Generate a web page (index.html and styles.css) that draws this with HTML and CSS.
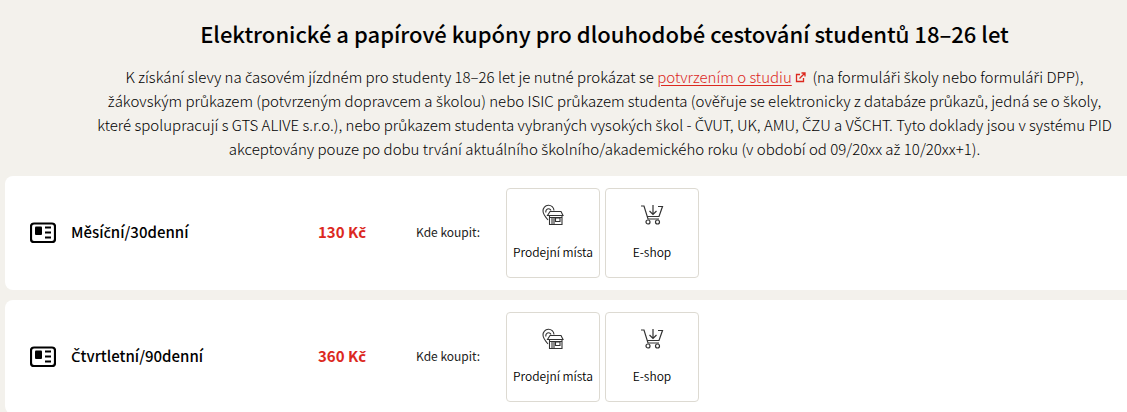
FILE: index.html
```html
<!DOCTYPE html>
<html lang="cs">
<head>
<meta charset="utf-8">
<title>Kupóny pro studenty</title>
<link rel="stylesheet" href="styles.css">
</head>
<body>
<svg class="sprite" aria-hidden="true">
  <symbol id="card" viewBox="0 0 26 22">
    <rect x="1" y="1.500" width="24" height="18.500" rx="3" fill="none" stroke="#000" stroke-width="2.200"/>
    <rect x="5" y="4.500" width="7" height="8.500" rx="1"/>
    <path d="M15 5.500h6M15 10.500h6M15 15.500h6" fill="none" stroke="#000" stroke-width="2"/>
  </symbol>
  <symbol id="store" viewBox="0 0 22 22">
    <g fill="none" stroke="#333" stroke-width="1.1">
      <path d="M6 16C3 12.500 1 10 1 7a5.500 5.500 0 0 1 11-.500"/>
      <path d="M4 8.500A2.600 2.600 0 1 1 9 6.500"/>
      <path d="M8 7.500h11l2 4H5.500z"/>
      <path d="M7.500 12v8.500h12.500V12M7.500 13.500H20M10 14v6M12 14v6M13.500 14h4.500v3.500h-4.500z"/>
    </g>
  </symbol>
  <symbol id="cart" viewBox="0 0 24 22">
    <g fill="none" stroke="#333" stroke-width="1.200">
      <path d="M1 2h3l4 13h11M18 2.500h4.500l-3.500 10H7.500"/>
      <path d="M13 1v9M9.500 7l3.500 3.500L16.500 7"/>
      <circle cx="8" cy="18" r="2"/>
      <circle cx="17.500" cy="18" r="2"/>
    </g>
  </symbol>
</svg>
<main class="page">
  <header class="intro">
    <h1 class="title">Elektronické a papírové kupóny pro dlouhodobé cestování studentů 18–26 let</h1>
    <p class="text">K získání slevy na <span class="caron">č</span>asovém jízdném pro studenty 18–26 let je nutné prokázat se <a class="link" href="#potvrzeni">potvrzením o studiu</a><svg class="external" viewBox="0 0 11 11" aria-hidden="true"><path d="M5 2.500H1.500v7h7V6M4.500 6.500L9.500 1.500M6.500 1h3.500v3.500"/></svg> &nbsp;(na formulá<span class="caron">ř</span>i <span class="caron">š</span>koly nebo formulá<span class="caron">ř</span>i DPP),<br>
    <span class="caron">ž</span>ákovským průkazem (potvrzeným dopravcem a <span class="caron">š</span>kolou) nebo ISIC průkazem studenta (ově<span class="caron">ř</span>uje se elektronicky z databáze průkazů, jedná se o <span class="caron">š</span>koly,<br>
    které spolupracují s GTS ALIVE s.r.o.), nebo průkazem studenta vybraných vysokých <span class="caron">š</span>kol - <span class="caron">Č</span>VUT, UK, AMU, <span class="caron">Č</span>ZU a V<span class="caron">Š</span>CHT. Tyto doklady jsou v systému PID<br>
    akceptovány pouze po dobu trvání aktuálního <span class="caron">š</span>kolního/akademického roku (v období od 09/20xx a<span class="caron">ž</span> 10/20xx+1).</p>
  </header>
  <section class="fares">
    <article class="fare">
      <svg class="fare-icon" aria-hidden="true"><use href="#card"/></svg>
      <h2 class="fare-name">Měsí<span class="caron">č</span>ní/30denní</h2>
      <strong class="price">130 K<span class="caron">č</span></strong>
      <span class="where">Kde koupit:</span>
      <div class="shops">
        <a class="shop" href="#prodejni-mista"><svg class="shop-icon" aria-hidden="true"><use href="#store"/></svg>Prodejní místa</a>
        <a class="shop" href="#e-shop"><svg class="shop-icon" aria-hidden="true"><use href="#cart"/></svg>E-shop</a>
      </div>
    </article>
    <article class="fare">
      <svg class="fare-icon" aria-hidden="true"><use href="#card"/></svg>
      <h2 class="fare-name"><span class="caron">Č</span>tvrtletní/90denní</h2>
      <strong class="price">360 K<span class="caron">č</span></strong>
      <span class="where">Kde koupit:</span>
      <div class="shops">
        <a class="shop" href="#prodejni-mista"><svg class="shop-icon" aria-hidden="true"><use href="#store"/></svg>Prodejní místa</a>
        <a class="shop" href="#e-shop"><svg class="shop-icon" aria-hidden="true"><use href="#cart"/></svg>E-shop</a>
      </div>
    </article>
  </section>
</main>
</body>
</html>
```
FILE: styles.css
```css
* { box-sizing: border-box; }
body {
  margin: 0;
  background: #f3f1ec;
  color: #000;
  font-family: "Noto Sans CJK SC", "Noto Sans", sans-serif;
  overflow: hidden;
}
.caron { font-family: "Noto Sans", "Open Sans", sans-serif; line-height: 1; }
.sprite { position: absolute; width: 0; height: 0; }
.page { padding: 18px 0 0 5px; }
.intro { padding-left: 77px; text-align: center; white-space: nowrap; }
.title { margin: 0 0 17px; font-size: 22px; line-height: 30px; font-weight: 500; }
.text { margin: 0 0 15px; font-size: 15px; line-height: 24px; font-weight: 300; color: #000; }
.link { color: #dc281e; text-underline-offset: 2px; }
.external { width: 11px; height: 11px; margin-left: 3px; fill: none; stroke: #dc281e; stroke-width: 1.3; }
.fares { display: flex; flex-direction: column; gap: 10px; }
.fare {
  display: flex;
  align-items: center;
  padding: 12px 25px;
  background: #fff;
  border-radius: 8px 0 0 8px;
}
.fare-icon { width: 26px; height: 22px; margin-right: 15px; flex: none; }
.fare-name, .price, .where { padding-bottom: 2px; line-height: 24px; }
.fare-name { margin: 0; width: 247px; font-size: 15px; font-weight: 500; }
.price { width: 98px; font-size: 15px; font-weight: 700; color: #dc281e; }
.where { width: 90px; font-size: 12px; color: #222; }
.shops { display: flex; gap: 5px; }
.shop {
  display: flex;
  flex-direction: column;
  align-items: center;
  gap: 17px;
  width: 94px;
  height: 90px;
  padding-top: 15px;
  border: 1px solid #dddad2;
  border-radius: 4px;
  color: #000;
  font-size: 12px;
  font-weight: 350;
  line-height: 18px;
  text-decoration: none;
  white-space: nowrap;
}
.shop-icon { width: 24px; height: 22px; }
```
